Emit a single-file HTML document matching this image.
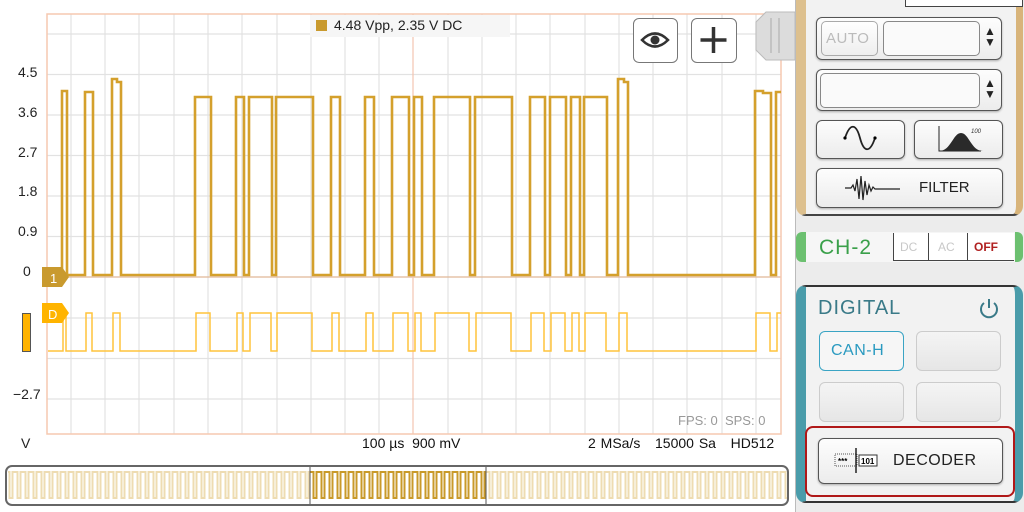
<!DOCTYPE html>
<html><head><meta charset="utf-8"><style>
*{margin:0;padding:0;box-sizing:border-box}
body{width:1024px;height:512px;overflow:hidden;background:#fff;font-family:"Liberation Sans",sans-serif;position:relative}
.a{position:absolute}
.lbl{position:absolute;font-size:14px;color:#222}
.btn{position:absolute;border:1.5px solid #555;border-radius:6px;background:linear-gradient(#fdfdfd,#ececec);box-shadow:0 1px 2px rgba(0,0,0,.3)}
.inset{position:absolute;border:1.5px solid #888;border-radius:5px;background:#fafafa}
</style></head><body>
<svg class="a" style="left:0;top:0" width="795" height="512">
<defs>
<pattern id="pl" x="8" y="0" width="8" height="512" patternUnits="userSpaceOnUse">
<path d="M0,472 H1.5 V498 H4.5 V472 H8" fill="none" stroke="#eedcb2" stroke-width="2"/></pattern>
<pattern id="pd" x="8" y="0" width="8" height="512" patternUnits="userSpaceOnUse">
<path d="M0,472 H1.5 V498 H4.5 V472 H8" fill="none" stroke="#c99a2a" stroke-width="2"/></pattern>
</defs>
<g stroke="#e2e2e2" stroke-width="1.2">
<line x1="71" y1="14" x2="71" y2="434"/><line x1="105" y1="14" x2="105" y2="434"/><line x1="139" y1="14" x2="139" y2="434"/><line x1="174" y1="14" x2="174" y2="434"/><line x1="208" y1="14" x2="208" y2="434"/><line x1="242" y1="14" x2="242" y2="434"/><line x1="277" y1="14" x2="277" y2="434"/><line x1="311" y1="14" x2="311" y2="434"/><line x1="345" y1="14" x2="345" y2="434"/><line x1="379" y1="14" x2="379" y2="434"/><line x1="448" y1="14" x2="448" y2="434"/><line x1="482" y1="14" x2="482" y2="434"/><line x1="516" y1="14" x2="516" y2="434"/><line x1="550" y1="14" x2="550" y2="434"/><line x1="585" y1="14" x2="585" y2="434"/><line x1="619" y1="14" x2="619" y2="434"/><line x1="653" y1="14" x2="653" y2="434"/><line x1="687" y1="14" x2="687" y2="434"/><line x1="722" y1="14" x2="722" y2="434"/><line x1="756" y1="14" x2="756" y2="434"/>
<line x1="47" y1="34" x2="781" y2="34"/><line x1="47" y1="74.5" x2="781" y2="74.5"/><line x1="47" y1="115" x2="781" y2="115"/><line x1="47" y1="155.5" x2="781" y2="155.5"/><line x1="47" y1="196" x2="781" y2="196"/><line x1="47" y1="236.5" x2="781" y2="236.5"/><line x1="47" y1="318" x2="781" y2="318"/><line x1="47" y1="358.5" x2="781" y2="358.5"/><line x1="47" y1="399" x2="781" y2="399"/>
</g>
<line x1="47" y1="277" x2="781" y2="277" stroke="#e0b898" stroke-width="1.2"/>
<line x1="413" y1="14" x2="413" y2="434" stroke="#f2c4b0" stroke-width="1.2"/>
<rect x="47" y="14" width="734" height="420" fill="none" stroke="#f6c8b0" stroke-width="1.5"/>
<path d="M48,275 H62 V91 H67 V94 V275 H85 V92 H93 V275 H112 V79 H117 V82 H121 V275 H195 V97 H211 V275 H236 V97 H244 V275 H249 V97 H272 V275 H276 V97 H313 V275 H331 V97 H340 V275 H365 V97 H374 V275 H392 V97 H409 V275 H414 V97 H422 V275 H434 V97 H470 V275 H475 V97 H512 V275 H530 V97 H545 V275 H550 V97 H566 V275 H571 V97 H580 V275 H584 V97 H607 V275 H618 V79 H624 V82 H628 V275 H755 V91 H763 V93 H771 V275 H776 V92 H781" fill="none" stroke="#d4a02c" stroke-width="2.6"/>
<path d="M48,351 H63 V313 H66 V351 H86 V313 H92 V351 H113 V313 H120 V351 H196 V313 H210 V351 H237 V313 H243 V351 H250 V313 H271 V351 H277 V313 H312 V351 H332 V313 H339 V351 H366 V313 H373 V351 H393 V313 H408 V351 H415 V313 H421 V351 H435 V313 H469 V351 H476 V313 H511 V351 H531 V313 H544 V351 H551 V313 H565 V351 H572 V313 H579 V351 H585 V313 H606 V351 H619 V313 H627 V351 H756 V313 H770 V351 H777 V313 H781" fill="none" stroke="#ffc43c" stroke-width="1.5"/>
<path d="M42,267 H62 L69,277 L62,287 H42 Z" fill="#c99a2e"/>
<text x="50" y="283" font-size="13" fill="#fff" font-family="Liberation Sans">1</text>
<path d="M42,303 H62 L69,313 L62,323 H42 Z" fill="#ffb400"/>
<text x="48" y="319" font-size="13" fill="#fff" font-family="Liberation Sans">D</text>
<rect x="22.5" y="313.5" width="8" height="38" fill="#ffb300" stroke="#555" stroke-width="1"/>
<rect x="8" y="468" width="779" height="36" fill="url(#pl)"/>
<rect x="310" y="468" width="176" height="36" fill="url(#pd)"/>
<line x1="310" y1="466" x2="310" y2="506" stroke="#555" stroke-width="1"/>
<line x1="486" y1="466" x2="486" y2="506" stroke="#555" stroke-width="1"/>
<rect x="6" y="466" width="782" height="39" rx="6" fill="none" stroke="#666" stroke-width="2"/>
<path d="M766,12 H795 V60 H766 L756,50 V22 Z" fill="#dcdcdc" stroke="#bbb"/>
<line x1="771" y1="18" x2="771" y2="53" stroke="#aaa"/><line x1="779" y1="18" x2="779" y2="53" stroke="#aaa"/>
</svg>
<div class="lbl" style="left:18px;top:64px">4.5</div>
<div class="lbl" style="left:18px;top:104px">3.6</div>
<div class="lbl" style="left:18px;top:144px">2.7</div>
<div class="lbl" style="left:18px;top:183px">1.8</div>
<div class="lbl" style="left:18px;top:223px">0.9</div>
<div class="lbl" style="left:23px;top:263px">0</div>
<div class="lbl" style="left:13px;top:386px">−2.7</div>
<div class="lbl" style="left:21px;top:435px">V</div>
<div class="lbl" style="left:362px;top:435px;color:#111">100 µs&nbsp;&nbsp;900 mV</div>
<div class="lbl" style="left:588px;top:435px;color:#111;word-spacing:1px">2 MSa/s&nbsp;&nbsp;&nbsp;15000 Sa&nbsp;&nbsp;&nbsp;HD512</div>
<div class="lbl" style="left:678px;top:413px;color:#999;font-size:13px">FPS: 0&nbsp;&nbsp;SPS: 0</div>
<div class="a" style="left:310px;top:15px;width:200px;height:22px;background:#f6f6f6"></div>
<div class="a" style="left:316px;top:20px;width:11px;height:11px;background:#c99a2e"></div>
<div class="lbl" style="left:334px;top:17px">4.48 Vpp, 2.35 V DC</div>
<div class="btn" style="left:633px;top:18px;width:45px;height:45px;border-color:#777;box-shadow:none;background:#fff">
<svg width="42" height="42"><path d="M8,21 Q21,8 34,21 Q21,34 8,21 Z" fill="none" stroke="#333" stroke-width="2.5"/><circle cx="21" cy="21" r="4.5" fill="#333"/></svg></div>
<div class="btn" style="left:691px;top:18px;width:46px;height:45px;border-color:#777;box-shadow:none;background:#fff">
<svg width="43" height="42"><path d="M21.5,8 V34 M8.5,21 H34.5" stroke="#333" stroke-width="3.5"/></svg></div>

<!-- right panel -->
<div class="a" style="left:795px;top:0;width:229px;height:512px;background:#ececec;border-left:1px solid #bbb"></div>
<div class="a" style="left:796px;top:-10px;width:227px;height:226px;background:#f2f2f2;border-radius:0 0 10px 10px;border:2px solid #444;border-top:none;border-left:10px solid #ddc08e;border-right:7px solid #d8b47a"></div>
<div class="a" style="left:905px;top:0;width:118px;height:7px;border:1px solid #444;border-top:none;background:#fff"></div>
<div class="btn" style="left:816px;top:17px;width:186px;height:43px"></div>
<div class="inset" style="left:821px;top:21px;width:57px;height:35px;border-color:#aaa;background:linear-gradient(#fff,#eee)"></div>
<div class="lbl" style="left:826px;top:30px;font-size:15px;color:#bbb;letter-spacing:.5px">AUTO</div>
<div class="inset" style="left:883px;top:21px;width:97px;height:35px"></div>
<div class="lbl" style="left:984px;top:26px;font-size:12px;line-height:11px;color:#222">▲<br>▼</div>
<div class="btn" style="left:816px;top:69px;width:186px;height:42px"></div>
<div class="inset" style="left:820px;top:73px;width:160px;height:35px"></div>
<div class="lbl" style="left:984px;top:78px;font-size:12px;line-height:11px;color:#222">▲<br>▼</div>
<div class="btn" style="left:816px;top:120px;width:89px;height:39px">
<svg width="86" height="36"><path d="M28,17 C33,2 39,2 43,17 C47,32 53,32 58,17" fill="none" stroke="#222" stroke-width="1.8"/><circle cx="28" cy="17" r="1.6"/><circle cx="58" cy="17" r="1.6"/></svg></div>
<div class="btn" style="left:914px;top:120px;width:89px;height:39px">
<svg width="86" height="36"><path d="M24,5 V30 H66" fill="none" stroke="#222" stroke-width="1"/><path d="M24,30 C36,30 38,12 46,12 C54,12 56,30 68,30 Z" fill="#2a2a2a"/><text x="56" y="12" font-size="6" font-style="italic" fill="#333">100</text></svg></div>
<div class="btn" style="left:816px;top:168px;width:187px;height:40px">
<svg class="a" style="left:28px;top:4px" width="60" height="30"><path d="M0,15 H6 L8,12 L10,18 L12,6 L14,26 L16,3 L18,27 L20,8 L22,22 L24,12 L26,18 L28,14 L30,16 H55" fill="none" stroke="#222" stroke-width="1.2"/></svg>
<div class="lbl" style="left:102px;top:10px;font-size:15px;color:#222">FILTER</div></div>

<div class="a" style="left:796px;top:232px;width:227px;height:30px;background:#f6f6f6;border-left:10px solid #6cc070;border-right:8px solid #6cc070;border-radius:6px"></div>
<div class="lbl" style="left:819px;top:236px;font-size:21px;color:#3aa04a;letter-spacing:1px">CH-2</div>
<div class="a" style="left:893px;top:233px;width:121px;height:28px;border-left:1px solid #444;border-bottom:1px solid #444;background:#fff"></div>
<div class="a" style="left:928px;top:233px;width:1px;height:28px;background:#444"></div>
<div class="a" style="left:967px;top:233px;width:1px;height:28px;background:#444"></div>
<div class="lbl" style="left:900px;top:240px;font-size:12px;color:#c8c8c8">DC</div>
<div class="lbl" style="left:938px;top:240px;font-size:12px;color:#c8c8c8">AC</div>
<div class="lbl" style="left:974px;top:240px;font-size:12px;color:#b02020;font-weight:bold">OFF</div>

<div class="a" style="left:796px;top:285px;width:227px;height:218px;background:#f2f2f2;border:2px solid #333;border-left:10px solid #4a9caa;border-right:8px solid #4a9caa;border-radius:10px"></div>
<div class="lbl" style="left:818px;top:297px;font-size:20px;color:#3a7a88;letter-spacing:1px">DIGITAL</div>
<svg class="a" style="left:977px;top:296px" width="24" height="24"><path d="M7,7 A8,8 0 1 0 17,7" fill="none" stroke="#3a7a88" stroke-width="2"/><path d="M12,3 V12" stroke="#3a7a88" stroke-width="2"/></svg>
<div class="a" style="left:819px;top:331px;width:85px;height:40px;border:1.5px solid #3aa4c4;border-radius:6px;background:#f6f6f6"></div>
<div class="lbl" style="left:831px;top:342px;font-size:16px;color:#2a9ac0;letter-spacing:.5px">CAN-H</div>
<div class="a" style="left:916px;top:331px;width:85px;height:40px;border:1px solid #ccc;border-radius:6px;background:linear-gradient(#f4f4f4,#e6e6e6)"></div>
<div class="a" style="left:819px;top:382px;width:85px;height:40px;border:1px solid #ccc;border-radius:6px;background:linear-gradient(#f4f4f4,#e6e6e6)"></div>
<div class="a" style="left:916px;top:382px;width:85px;height:40px;border:1px solid #ccc;border-radius:6px;background:linear-gradient(#f4f4f4,#e6e6e6)"></div>
<div class="a" style="left:805px;top:426px;width:210px;height:71px;border:2.5px solid #b01818;border-radius:8px"></div>
<div class="btn" style="left:818px;top:438px;width:185px;height:46px">
<svg class="a" style="left:14px;top:6px" width="50" height="32"><rect x="2" y="9" width="22" height="12" fill="none" stroke="#555" stroke-dasharray="1,1"/><text x="5" y="19" font-size="8" font-weight="bold">***</text><line x1="23" y1="3" x2="23" y2="28" stroke="#222" stroke-width="1.5"/><rect x="26" y="10" width="18" height="11" fill="#fff" stroke="#333"/><text x="28" y="19" font-size="8" font-weight="bold">101</text></svg>
<div class="lbl" style="left:74px;top:13px;font-size:16px;color:#222;letter-spacing:.5px">DECODER</div></div>
</body></html>
